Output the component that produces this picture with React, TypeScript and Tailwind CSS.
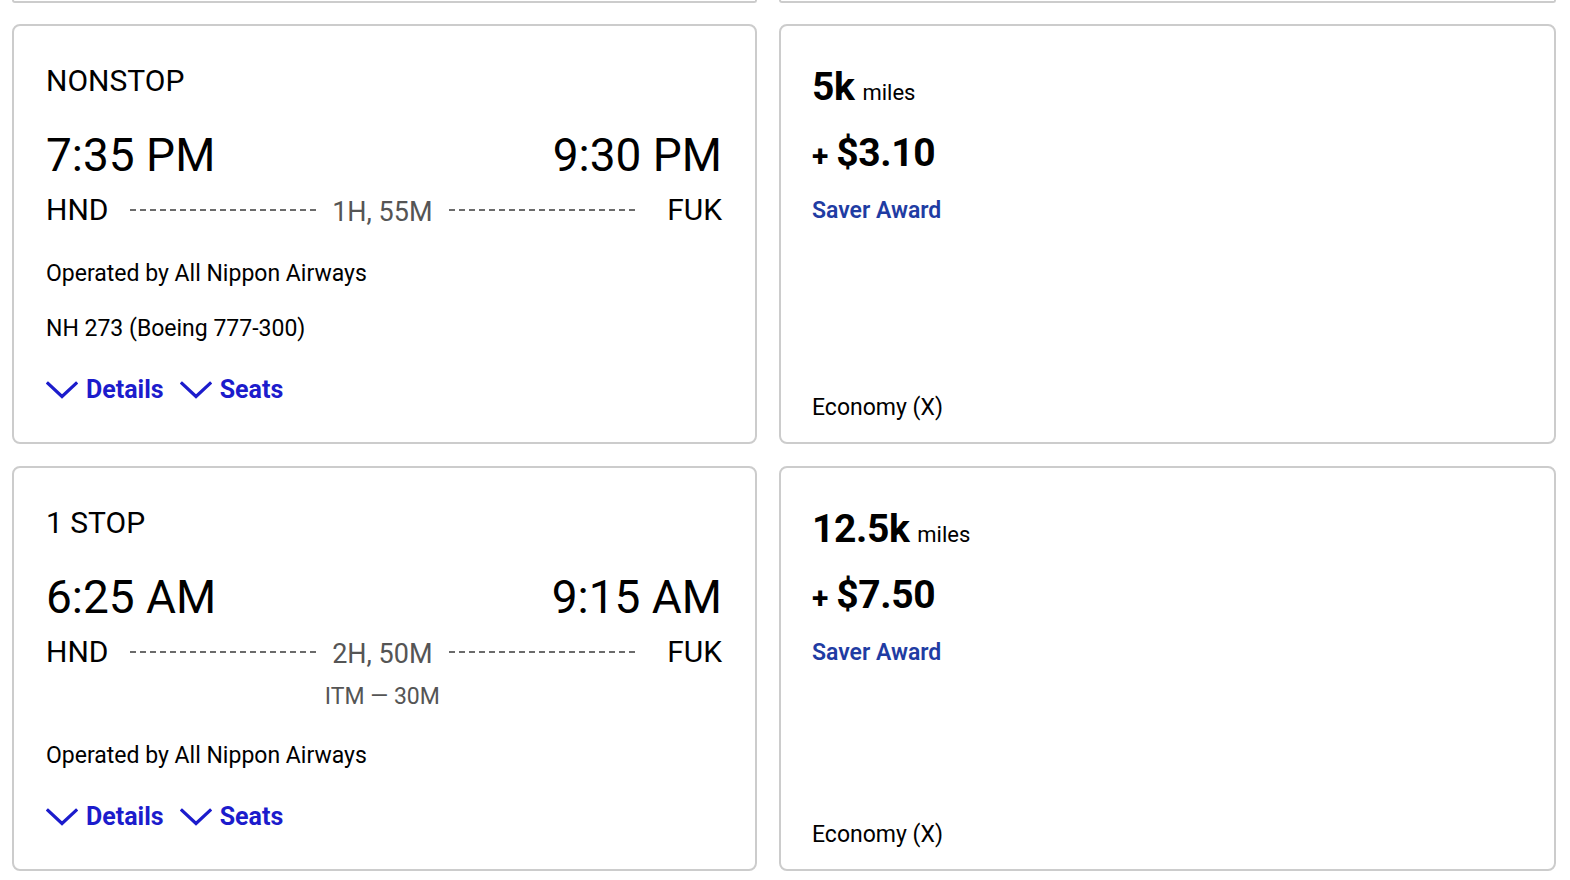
import React from 'react';

interface Flight {
  id: string;
  stops: string;
  depart: string;
  arrive: string;
  from: string;
  to: string;
  duration: string;
  layover?: string;
  operator: string;
  equipment?: string;
  miles: string;
  cash: string;
  award: string;
  cabin: string;
}

const flights: Flight[] = [
  {
    id: 'nh273',
    stops: 'NONSTOP',
    depart: '7:35 PM',
    arrive: '9:30 PM',
    from: 'HND',
    to: 'FUK',
    duration: '1H, 55M',
    operator: 'Operated by All Nippon Airways',
    equipment: 'NH 273 (Boeing 777-300)',
    miles: '5k',
    cash: '$3.10',
    award: 'Saver Award',
    cabin: 'Economy (X)',
  },
  {
    id: 'hnd-itm-fuk',
    stops: '1 STOP',
    depart: '6:25 AM',
    arrive: '9:15 AM',
    from: 'HND',
    to: 'FUK',
    duration: '2H, 50M',
    layover: 'ITM — 30M',
    operator: 'Operated by All Nippon Airways',
    miles: '12.5k',
    cash: '$7.50',
    award: 'Saver Award',
    cabin: 'Economy (X)',
  },
];

function Chevron() {
  return (
    <svg width="32" height="18" viewBox="0 0 32 18" fill="none" className="shrink-0">
      <path d="M2 2.5 L16 15.5 L30 2.5" stroke="#1c1ccc" strokeWidth="3.2" strokeLinecap="square" />
    </svg>
  );
}

function Dashes() {
  return <div className="h-[2px] flex-1 bg-[repeating-linear-gradient(to_right,#6b6b6b_0_6px,transparent_6px_10px)]" />;
}

function FlightCard({ flight }: { flight: Flight }) {
  return (
    <div className="rounded-lg border-2 border-[#cccccc] bg-white pt-[39px] pr-[33px] pb-[36px] pl-[32px] text-black">
      <div className="text-[30px] leading-[32px]">{flight.stops}</div>

      <div className="mt-[30px] flex justify-between text-[46px] leading-[56px]">
        <span>{flight.depart}</span>
        <span>{flight.arrive}</span>
      </div>

      <div className="mt-[9px] flex h-[36px] items-center">
        <span className="text-[30px] leading-[36px]">{flight.from}</span>
        <div className="ml-[21px] flex flex-1 items-center">
          <Dashes />
          <div className="relative mx-[16px]">
            <span className="block pt-[3px] text-[27px] leading-[36px] text-[#555555]">{flight.duration}</span>
            {flight.layover && (
              <span className="absolute top-[50px] left-1/2 -translate-x-1/2 whitespace-nowrap text-[23px] leading-[28px] text-[#555555]">
                {flight.layover}
              </span>
            )}
          </div>
          <Dashes />
        </div>
        <span className="ml-[32px] text-[30px] leading-[36px]">{flight.to}</span>
      </div>

      {flight.layover && <div className="h-[39px]" />}

      <div className={`${flight.layover ? 'mt-[33px]' : 'mt-[32px]'} text-[23px] leading-[28px]`}>
        {flight.operator}
      </div>
      {flight.equipment && (
        <div className="mt-[27px] text-[23px] leading-[28px]">{flight.equipment}</div>
      )}

      <div className="mt-[31px] flex h-[32px] items-center gap-[8px] text-[25px] font-bold text-[#1c1ccc]">
        <Chevron />
        <span className="mr-[8px]">Details</span>
        <Chevron />
        <span>Seats</span>
      </div>
    </div>
  );
}

function FareCard({ flight }: { flight: Flight }) {
  return (
    <div className="flex flex-col rounded-lg border-2 border-[#cccccc] bg-white pt-[41px] pb-[20px] pl-[31px] text-black">
      <div className="flex items-baseline gap-[8px] leading-[40px]">
        <span className="text-[39px] font-bold tracking-[-0.01em]">{flight.miles}</span>
        <span className="text-[22px]">miles</span>
      </div>
      <div className="mt-[18px] flex items-baseline gap-[8px] leading-[44px]">
        <span className="text-[30px] font-bold">+</span>
        <span className="text-[39px] font-bold tracking-[-0.01em]">{flight.cash}</span>
      </div>
      <div className="mt-[19px] text-[23px] font-semibold leading-[28px] text-[#1f3ca3]">{flight.award}</div>
      <div className="mt-auto text-[23px] leading-[28px]">{flight.cabin}</div>
    </div>
  );
}

export default function App() {
  return (
    <div className="min-h-screen bg-white pl-[12px] font-['Roboto',sans-serif]">
      {/* bottom edge of the previous result row */}
      <div className="mb-[21px] grid grid-cols-[745px_777px] gap-x-[22px]">
        <div className="h-[3px] rounded-b-lg border-2 border-t-0 border-[#cccccc]" />
        <div className="h-[3px] rounded-b-lg border-2 border-t-0 border-[#cccccc]" />
      </div>

      <div className="grid grid-cols-[745px_777px] gap-x-[22px] gap-y-[22px]">
        {flights.map((flight) => (
          <React.Fragment key={flight.id}>
            <FlightCard flight={flight} />
            <FareCard flight={flight} />
          </React.Fragment>
        ))}
      </div>
    </div>
  );
}
